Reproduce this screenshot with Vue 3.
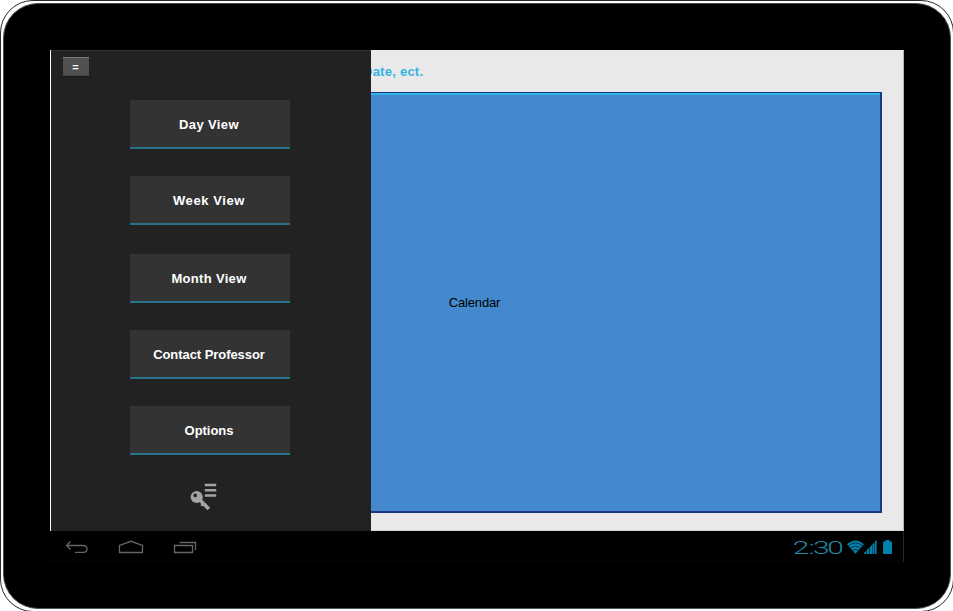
<script setup>
const items = [
  { label: 'Day View', gap: 27, spacing: 0.38 },
  { label: 'Week View', gap: 29, spacing: 0.6 },
  { label: 'Month View', gap: 27, spacing: 0.32 },
  { label: 'Contact Professor', gap: 27, spacing: -0.06 },
  { label: 'Options', gap: 0, spacing: -0.05 },
]
</script>

<template>
  <div class="page">
    <div class="tablet">
      <div class="bezel">
        <div class="screen">
          <main class="content">
            <header class="title">Date, ect.</header>
            <section class="calendar">Calendar</section>
          </main>
          <aside class="drawer">
            <button class="toggle">=</button>
            <nav class="menu">
              <button
                v-for="item in items"
                :key="item.label"
                class="item"
                :style="{ marginBottom: item.gap + 'px', letterSpacing: item.spacing + 'px' }"
              >{{ item.label }}</button>
            </nav>
            <svg class="key" width="28" height="28" viewBox="0 0 28 28">
              <path d="M14.8 1.9h11.4M14.8 7.3h11.4M14.8 12.6h11.4" stroke="#a3a3a3" stroke-width="2.5" />
              <path d="M9.5 16.5l3.2 3.2v1.6l1.8.2 4.3 4.6" fill="none" stroke="#a3a3a3" stroke-width="3.6" />
              <circle cx="6.7" cy="14" r="6.1" fill="#a3a3a3" />
              <circle cx="5.2" cy="12.4" r="1.8" fill="#222" />
            </svg>
          </aside>
          <footer class="system">
            <div class="nav">
              <svg width="24" height="14" viewBox="0 0 24 14">
                <path d="M5.5 1.5L1.5 5.5l4 4M1.5 5.5h17a3.2 3.2 0 0 1 0 6.8h-8.5" />
              </svg>
              <svg width="26" height="14" viewBox="0 0 26 14">
                <path d="M1.5 12.5V5.5L13 1.3l11.5 4.2v7z" />
              </svg>
              <svg width="24" height="14" viewBox="0 0 24 14">
                <path d="M1.5 5.5h18v7h-18zM6.5 2.5h16v7.5" />
              </svg>
            </div>
            <div class="status">
              <svg class="clock" width="56" height="20" viewBox="0 0 56 20">
                <text transform="scale(1.57 1)" x="1.1 11.2 14.1 23.1" y="16.3">2:30</text>
              </svg>
              <svg class="wifi" width="17" height="14" viewBox="0 0 18 14" preserveAspectRatio="none">
                <path d="M0 4.2Q9-3.4 18 4.2L9 13.8z" fill="#0080ab" />
                <path d="M1.5 5.8Q9-.2 16.5 5.8M3.5 8.3Q9 4 14.5 8.3M5.5 10.6Q9 8 12.5 10.6" fill="none" stroke="#000" stroke-width=".6" />
              </svg>
              <svg class="signal" width="13" height="14" viewBox="0 0 13 14">
                <path d="M0 14v-1l2-2v3zM2.6 14v-3.7L5 7.9V14zM5.6 14V7.3L8 4.9V14zM8.4 14V4.5l1.9-1.9V14zM10.8 14V1.7L12.6 0v14z" fill="#0080ab" />
              </svg>
              <svg class="battery" width="9" height="14" viewBox="0 0 9 14">
                <path d="M0 1.5h2.5V0h4v1.5H9V14H0z" fill="#0080ab" />
              </svg>
            </div>
          </footer>
        </div>
      </div>
    </div>
  </div>
</template>

<style>
body {
  background: #fff;
}
</style>

<style scoped>
.page {
  width: 953px;
  height: 611px;
  overflow: hidden;
  font: 13px/16px "Liberation Sans", Arial, sans-serif;
}
.tablet {
  box-sizing: border-box;
  width: 954px;
  height: 612px;
  padding: 2px;
  border: 1px solid #2c282c;
  border-radius: 33px;
  background: #fff;
}
.bezel {
  box-sizing: border-box;
  width: 948px;
  height: 606px;
  padding: 46px 0 0 46px;
  border: 1px solid #514d51;
  border-radius: 35px;
  background: #000;
}
.screen {
  position: relative;
  width: 854px;
  height: 512px;
}
.content {
  box-sizing: border-box;
  height: 481px;
  padding: 14px 21px 17px 16px;
  border-left: 1px solid #fff;
  border-right: 1px solid #b5b5b5;
  border-bottom: 1px solid #d6d6d6;
  background: #e9e9e9;
}
.title {
  height: 28px;
  padding-left: 296px;
  color: #33b5e5;
  font-weight: bold;
  letter-spacing: 0.25px;
}
.calendar {
  box-sizing: border-box;
  display: flex;
  align-items: center;
  justify-content: center;
  width: 816px;
  height: 421px;
  padding: 1px 0 0 1px;
  margin-left: -1px;
  border: 2px solid #1a3685;
  border-top-width: 1px;
  background: #4489ce;
  box-shadow: inset 0 2px #33b5e5;
  color: #000;
  letter-spacing: -0.15px;
}
.drawer {
  position: absolute;
  top: 0;
  left: 1px;
  box-sizing: border-box;
  display: flex;
  flex-direction: column;
  width: 320px;
  height: 481px;
  padding: 6px 0 0 12px;
  border-top: 1px solid #303030;
  background: #222;
}
button {
  margin: 0;
  padding: 0;
  border: 0;
  color: #fff;
  font: bold 13px/16px "Liberation Sans", Arial, sans-serif;
}
.toggle {
  width: 26px;
  height: 19px;
  padding-right: 1px;
  border-top: 1px solid #777;
  border-bottom: 1px solid #444;
  background: #505050;
  font-size: 11px;
  line-height: 14px;
  box-shadow: 0 1px 1px #181818;
}
.menu {
  display: flex;
  flex-direction: column;
  width: 160px;
  margin: 24px 0 0 67px;
}
.item {
  height: 49px;
  border-bottom: 2px solid #28718b;
  background: #333;
  padding: 2px 2px 0 0;
}
.key {
  margin: 28px 0 0 127px;
}
.system {
  box-sizing: border-box;
  display: flex;
  justify-content: space-between;
  height: 31px;
  border-right: 1px solid #292929;
  border-bottom: 1px solid #080808;
}
.nav {
  display: flex;
  gap: 29px;
  padding: 9px 0 0 15px;
}
.nav path {
  fill: none;
  stroke: #666;
  stroke-width: 1.3;
}
.status {
  display: flex;
  align-items: flex-start;
  padding: 7px 11px 0 0;
}
.clock text {
  fill: #2387a8;
  font: 300 19px Roboto, "Open Sans", sans-serif;
}
.wifi {
  margin: 2px 0 0 0;
}
.signal {
  margin-top: 2px;
}
.battery {
  margin: 2px 0 0 6px;
}
</style>
